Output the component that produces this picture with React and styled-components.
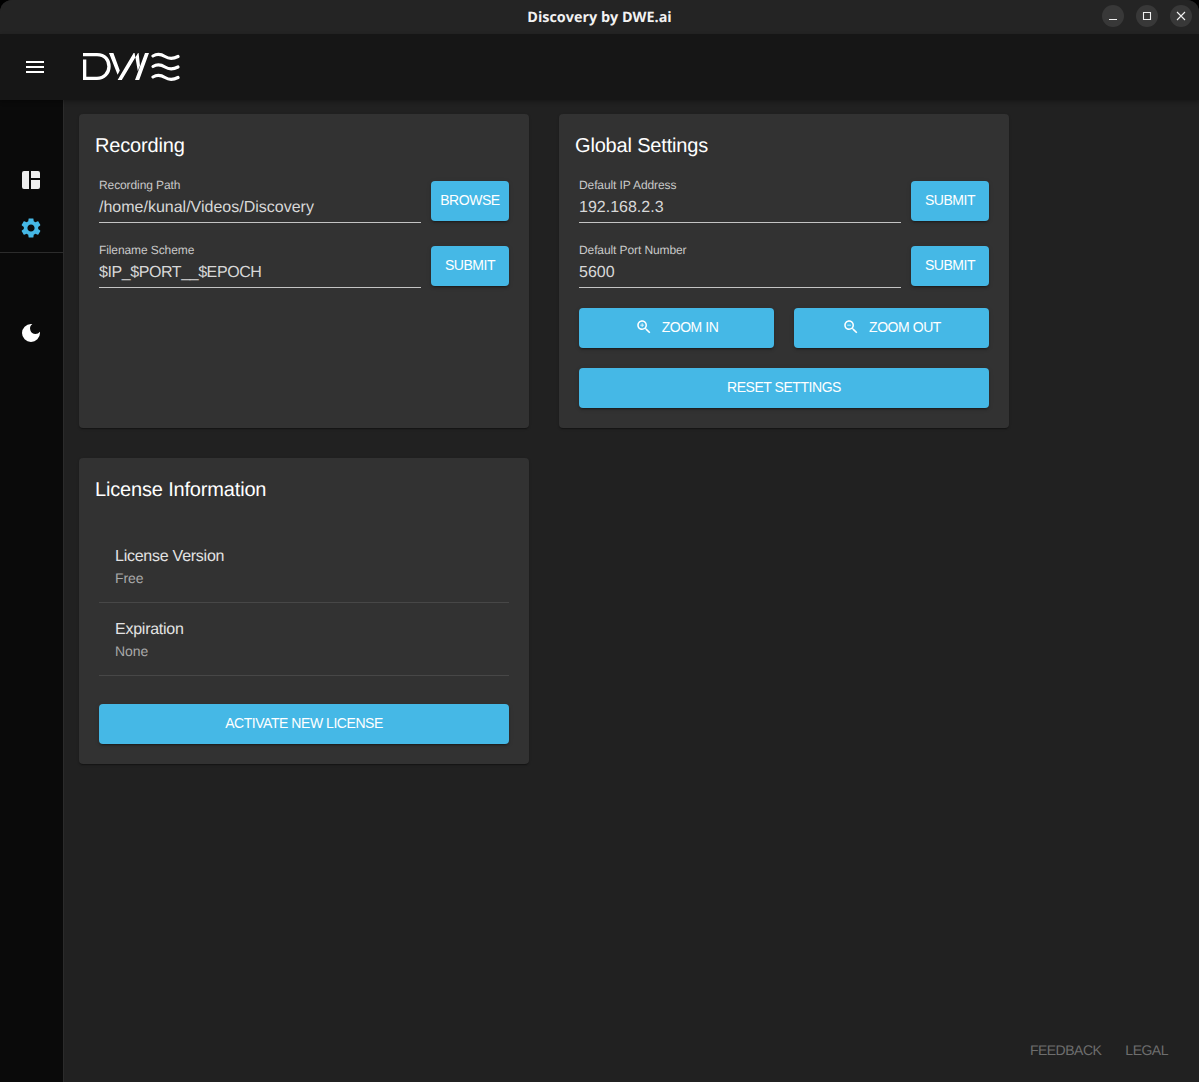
import React from "react";
import styled, { createGlobalStyle } from "styled-components";

const Global = createGlobalStyle`
  html, body { margin: 0; padding: 0; background: #000; }
  body { font-family: "Liberation Sans", Arial, sans-serif; text-rendering: geometricPrecision; }
  * { box-sizing: border-box; }
`;

const Windowed = styled.div`
  width: 1199px;
  height: 1082px;
  display: flex;
  flex-direction: column;
  overflow: hidden;
  background: #212121;
  border-radius: 12px 12px 0 0;
`;

const TitleBar = styled.header`
  height: 34px;
  flex: none;
  background: #242424;
  display: flex;
  align-items: center;
  justify-content: center;
  position: relative;
  color: #f2f2f2;
  font-family: "Open Sans", "Noto Sans", sans-serif;
  font-size: 14.4px;
  font-weight: 700;
`;

const WindowButtons = styled.div`
  position: absolute;
  right: 7px;
  top: 5px;
  display: flex;
  gap: 12px;
`;

const WindowButton = styled.button`
  width: 22px;
  height: 22px;
  padding: 0;
  border: 0;
  border-radius: 50%;
  background: #383838;
  display: flex;
  align-items: center;
  justify-content: center;
`;

const AppBar = styled.div`
  height: 66px;
  flex: none;
  background: #161616;
  display: flex;
  align-items: center;
  padding-left: 24px;
  gap: 37px;
  box-shadow: 0 2px 4px rgba(0, 0, 0, 0.3);
  position: relative;
  z-index: 2;
`;

const Body = styled.div`
  flex: 1;
  display: flex;
  min-height: 0;
`;

const SideBar = styled.nav`
  width: 64px;
  flex: none;
  background: #0a0a0a;
  border-right: 1px solid #2b2b2b;
  padding-top: 68px;
  display: flex;
  flex-direction: column;
`;

const NavIcon = styled.div`
  height: 24px;
  margin-bottom: 24px;
  padding-left: 19px;
  display: flex;
  align-items: center;
`;

const NavDivider = styled.div`
  height: 1px;
  width: 63px;
  background: #2c2c2c;
  margin-top: -12px;
  margin-bottom: 68px;
`;

const Main = styled.main`
  flex: 1;
  position: relative;
  padding: 14px 15px;
`;

const Grid = styled.div`
  display: grid;
  grid-template-columns: 450px 450px;
  column-gap: 30px;
  row-gap: 30px;
  align-items: start;
`;

const Card = styled.section`
  background: #323232;
  border-radius: 4px;
  padding: 16px 20px 20px;
  min-height: ${(p) => p.$minHeight || 0}px;
  box-shadow: 0 2px 1px -1px rgba(0,0,0,.2), 0 1px 1px 0 rgba(0,0,0,.14), 0 1px 3px 0 rgba(0,0,0,.12);
`;

const CardTitle = styled.h2`
  margin: 0 0 0 -4px;
  height: 30px;
  font-size: 20px;
  line-height: 32px;
  font-weight: 400;
  letter-spacing: -0.17px;
  color: #fff;
`;

const Row = styled.div`
  display: flex;
  gap: 10px;
  align-items: flex-start;
  margin-top: ${(p) => p.$top ?? 23}px;
`;

const Field = styled.label`
  flex: 1;
  display: block;
  height: 42px;
  border-bottom: 1px solid #c4c4c4;
`;

const FieldLabel = styled.div`
  font-size: 12px;
  line-height: 14px;
  letter-spacing: -0.1px;
  color: #c9c9c9;
  margin-top: -3px;
  margin-bottom: 5px;
`;

const FieldValue = styled.div`
  font-size: 16px;
  line-height: 22px;
  letter-spacing: ${(p) => (p.$caps ? "-0.42px" : "0")};
  color: #d8d8d8;
`;

const Button = styled.button`
  height: 40px;
  flex: ${(p) => (p.$grow ? 1 : "none")};
  width: ${(p) => (p.$grow ? "auto" : "78px")};
  background: #45b8e6;
  color: #fff;
  border: 0;
  border-radius: 4px;
  font-family: inherit;
  font-size: 14px;
  letter-spacing: -0.45px;
  display: flex;
  align-items: center;
  justify-content: center;
  gap: 9px;
  padding: 0 0 2px;
  box-shadow: 0 3px 1px -2px rgba(0,0,0,.2), 0 2px 2px 0 rgba(0,0,0,.14), 0 1px 5px 0 rgba(0,0,0,.12);
`;

const ButtonRow = styled.div`
  display: flex;
  gap: 20px;
  margin-top: ${(p) => p.$top ?? 20}px;
`;

const LicenseList = styled.ul`
  list-style: none;
  margin: 26px 0 28px;
  padding: 0;
`;

const LicenseItem = styled.li`
  height: 73px;
  padding: 15px 16px 0;
  border-bottom: 1px solid #474747;
`;

const ItemTitle = styled.div`
  font-size: 16px;
  line-height: 23px;
  letter-spacing: -0.25px;
  color: #e3e3e3;
`;

const ItemValue = styled.div`
  font-size: 14px;
  line-height: 20px;
  letter-spacing: -0.1px;
  color: #a9a9a9;
`;

const Footer = styled.footer`
  position: absolute;
  right: 31px;
  bottom: 24px;
  display: flex;
  gap: 24px;
  font-size: 14px;
  letter-spacing: -0.5px;
  color: #6e6e6e;
`;

const Logo = () => (
  <svg width="98" height="30" viewBox="0 0 98 30" fill="#fff" stroke="none">
    <path
      d="M0 2.6H14C22 2.6 26 8 26 14.5C26 21 21 26.4 14 26.4H1.6V7.5"
      fill="none"
      stroke="#fff"
      strokeWidth="3.4"
    />
    <path d="M26 1h4.4l6.4 17.5-2.2 4.2zM34.6 28h4.2L55 1h-4.4zM51.6 1h4l1.4 12.5-2.2 5.5zM52 28h4.2L66 1h-4z" />
    <g fill="none" stroke="#fff" strokeWidth="3.2" strokeLinecap="round">
      <path d="M70 4C74 1.5 78 2 82 4.5S90 7 95 4.5" />
      <path d="M70 14.5C74 12 78 12.5 82 15S90 17.5 95 15" />
      <path d="M70 25C74 22.5 78 23 82 25.5S90 28 95 25.5" />
    </g>
  </svg>
);

const Menu = () => (
  <svg width="22" height="14" viewBox="0 0 22 14" fill="#fff">
    <rect x="2" y="1" width="18" height="2" />
    <rect x="2" y="6" width="18" height="2" />
    <rect x="2" y="11" width="18" height="2" />
  </svg>
);

const Dashboard = () => (
  <svg width="24" height="24" viewBox="0 0 24 24" fill="#eee">
    <path d="M5 3h5v18H5a2 2 0 0 1-2-2V5a2 2 0 0 1 2-2zM12 3h7a2 2 0 0 1 2 2v5h-9zM12 12h9v7a2 2 0 0 1-2 2h-7z" />
  </svg>
);

const Gear = () => (
  <svg width="24" height="24" viewBox="0 0 24 24" fill="#45b8e6">
    <path d="M19.14 12.94c.04-.3.06-.61.06-.94 0-.32-.02-.64-.07-.94l2.03-1.58c.18-.14.23-.41.12-.61l-1.92-3.32c-.12-.22-.37-.29-.59-.22l-2.39.96c-.5-.38-1.03-.7-1.62-.94l-.36-2.54c-.04-.24-.24-.41-.48-.41h-3.84c-.24 0-.43.17-.47.41l-.36 2.54c-.59.24-1.13.57-1.62.94l-2.39-.96c-.22-.08-.47 0-.59.22L2.74 8.87c-.12.21-.08.47.12.61l2.03 1.58c-.05.3-.09.63-.09.94s.02.64.07.94l-2.03 1.58c-.18.14-.23.41-.12.61l1.92 3.32c.12.22.37.29.59.22l2.39-.96c.5.38 1.03.7 1.62.94l.36 2.54c.05.24.24.41.48.41h3.84c.24 0 .44-.17.47-.41l.36-2.54c.59-.24 1.13-.56 1.62-.94l2.39.96c.22.08.47 0 .59-.22l1.92-3.32c.12-.22.07-.47-.12-.61l-2.01-1.58zM12 15.6c-1.98 0-3.6-1.62-3.6-3.6s1.62-3.6 3.6-3.6 3.6 1.62 3.6 3.6-1.62 3.6-3.6 3.6z" />
  </svg>
);

const Moon = () => (
  <svg width="24" height="24" viewBox="0 0 24 24" fill="#fff">
    <path d="M12 3a9 9 0 1 0 9 9c0-.46-.04-.92-.1-1.36a5.39 5.39 0 0 1-4.4 2.26 5.4 5.4 0 0 1-3.14-9.8A9 9 0 0 0 12 3z" />
  </svg>
);

const ZoomIcon = ({ plus }) => (
  <svg width="18" height="18" viewBox="0 0 24 24" fill="#fff">
    <path d="M15.5 14h-.79l-.28-.27C15.41 12.59 16 11.11 16 9.5 16 5.91 13.09 3 9.5 3S3 5.91 3 9.5 5.91 16 9.5 16c1.61 0 3.09-.59 4.23-1.57l.27.28v.79l5 4.99L20.49 19l-4.99-5zm-6 0C7.01 14 5 11.99 5 9.5S7.01 5 9.5 5 14 7.01 14 9.5 11.99 14 9.5 14z" />
    {plus ? <path d="M12 10h-2v2H9v-2H7V9h2V7h1v2h2v1z" /> : <path d="M7 9h5v1H7z" />}
  </svg>
);

const WinGlyph = ({ d }) => (
  <svg width="12" height="12" viewBox="0 0 12 12" fill="none" stroke="#f0f0f0" strokeWidth="1.1">
    <path d={d} />
  </svg>
);

export default function App() {
  return (
    <>
      <Global />
      <Windowed>
        <TitleBar>
          Discovery by DWE.ai
          <WindowButtons>
            <WindowButton><WinGlyph d="M2 9.5h8" /></WindowButton>
            <WindowButton><WinGlyph d="M2.5 2.5h7v7h-7z" /></WindowButton>
            <WindowButton><WinGlyph d="M2 2l8 8M10 2l-8 8" /></WindowButton>
          </WindowButtons>
        </TitleBar>
        <AppBar>
          <Menu />
          <Logo />
        </AppBar>
        <Body>
          <SideBar>
            <NavIcon><Dashboard /></NavIcon>
            <NavIcon><Gear /></NavIcon>
            <NavDivider />
            <NavIcon><Moon /></NavIcon>
          </SideBar>
          <Main>
            <Grid>
              <Card $minHeight={314}>
                <CardTitle>Recording</CardTitle>
                <Row $top={21}>
                  <Field>
                    <FieldLabel>Recording Path</FieldLabel>
                    <FieldValue>/home/kunal/Videos/Discovery</FieldValue>
                  </Field>
                  <Button>BROWSE</Button>
                </Row>
                <Row>
                  <Field>
                    <FieldLabel>Filename Scheme</FieldLabel>
                    <FieldValue $caps>$IP_$PORT__$EPOCH</FieldValue>
                  </Field>
                  <Button>SUBMIT</Button>
                </Row>
              </Card>
              <Card $minHeight={314}>
                <CardTitle>Global Settings</CardTitle>
                <Row $top={21}>
                  <Field>
                    <FieldLabel>Default IP Address</FieldLabel>
                    <FieldValue>192.168.2.3</FieldValue>
                  </Field>
                  <Button>SUBMIT</Button>
                </Row>
                <Row>
                  <Field>
                    <FieldLabel>Default Port Number</FieldLabel>
                    <FieldValue>5600</FieldValue>
                  </Field>
                  <Button>SUBMIT</Button>
                </Row>
                <ButtonRow>
                  <Button $grow><ZoomIcon plus />ZOOM IN</Button>
                  <Button $grow><ZoomIcon />ZOOM OUT</Button>
                </ButtonRow>
                <ButtonRow>
                  <Button $grow>RESET SETTINGS</Button>
                </ButtonRow>
              </Card>
              <Card>
                <CardTitle>License Information</CardTitle>
                <LicenseList>
                  <LicenseItem>
                    <ItemTitle>License Version</ItemTitle>
                    <ItemValue>Free</ItemValue>
                  </LicenseItem>
                  <LicenseItem>
                    <ItemTitle>Expiration</ItemTitle>
                    <ItemValue>None</ItemValue>
                  </LicenseItem>
                </LicenseList>
                <ButtonRow $top={0}>
                  <Button $grow>ACTIVATE NEW LICENSE</Button>
                </ButtonRow>
              </Card>
            </Grid>
            <Footer>
              <span>FEEDBACK</span>
              <span>LEGAL</span>
            </Footer>
          </Main>
        </Body>
      </Windowed>
    </>
  );
}
